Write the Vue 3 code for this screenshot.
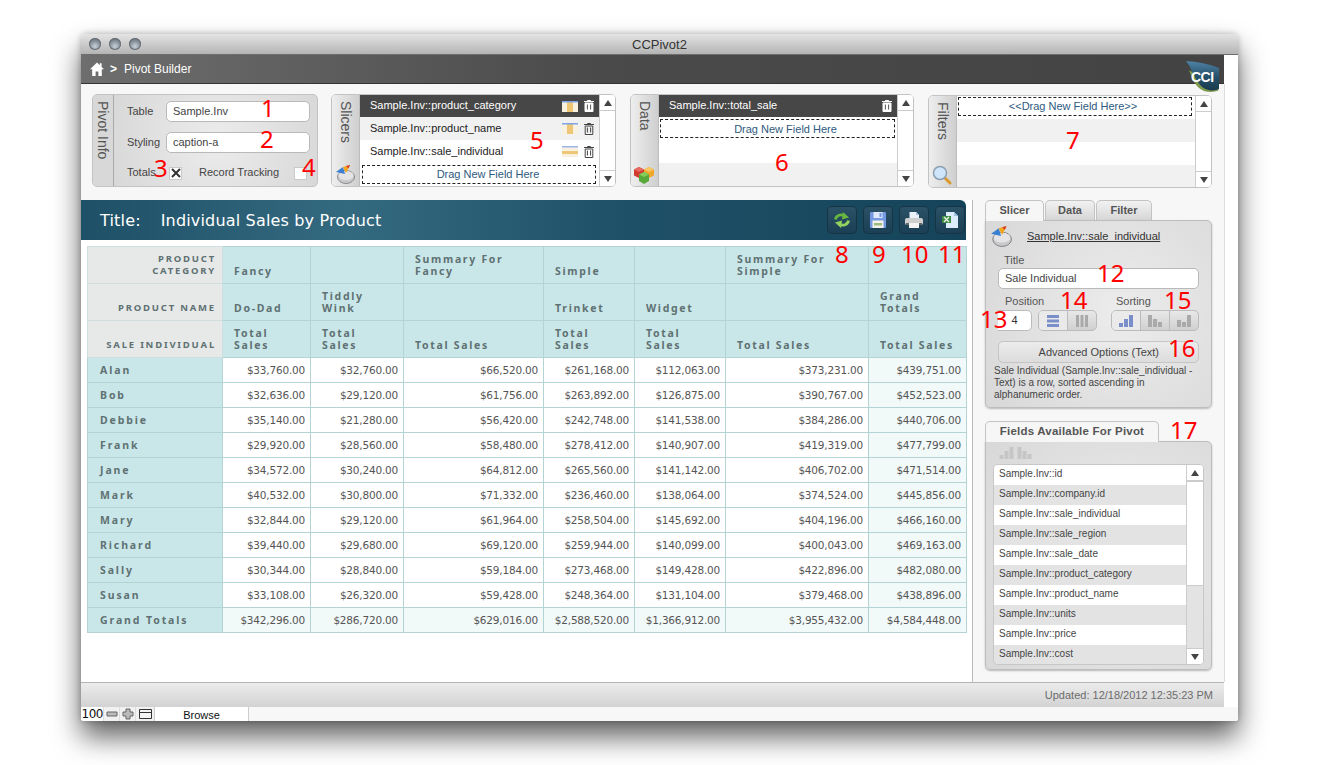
<script setup>
const notes = [
  ['1', 261, 95], ['2', 260, 126], ['3', 154, 155], ['4', 302, 154], ['5', 530, 127], ['6', 775, 149], ['7', 1066, 127],
  ['8', 835, 241], ['9', 872, 241], ['10', 901, 241], ['11', 938, 241], ['12', 1097, 260], ['13', 980, 306],
  ['14', 1060, 287], ['15', 1164, 287], ['16', 1168, 335], ['17', 1170, 417]
]
const cols = [135, 88, 93, 140, 91, 91, 143, 98]
const rows = [
  ['Alan','$33,760.00','$32,760.00','$66,520.00','$261,168.00','$112,063.00','$373,231.00','$439,751.00'],
  ['Bob','$32,636.00','$29,120.00','$61,756.00','$263,892.00','$126,875.00','$390,767.00','$452,523.00'],
  ['Debbie','$35,140.00','$21,280.00','$56,420.00','$242,748.00','$141,538.00','$384,286.00','$440,706.00'],
  ['Frank','$29,920.00','$28,560.00','$58,480.00','$278,412.00','$140,907.00','$419,319.00','$477,799.00'],
  ['Jane','$34,572.00','$30,240.00','$64,812.00','$265,560.00','$141,142.00','$406,702.00','$471,514.00'],
  ['Mark','$40,532.00','$30,800.00','$71,332.00','$236,460.00','$138,064.00','$374,524.00','$445,856.00'],
  ['Mary','$32,844.00','$29,120.00','$61,964.00','$258,504.00','$145,692.00','$404,196.00','$466,160.00'],
  ['Richard','$39,440.00','$29,680.00','$69,120.00','$259,944.00','$140,099.00','$400,043.00','$469,163.00'],
  ['Sally','$30,344.00','$28,840.00','$59,184.00','$273,468.00','$149,428.00','$422,896.00','$482,080.00'],
  ['Susan','$33,108.00','$26,320.00','$59,428.00','$248,364.00','$131,104.00','$379,468.00','$438,896.00'],
  ['Grand Totals','$342,296.00','$286,720.00','$629,016.00','$2,588,520.00','$1,366,912.00','$3,955,432.00','$4,584,448.00']
]
const fields = ['id','company.id','sale_individual','sale_region','sale_date','product_category','product_name','units','price','cost']
</script>

<template>
  <div class="page">
  <div class="win">
    <div class="titlebar">
      <div class="lights"><i></i><i></i><i></i></div>
      <span>CCPivot2</span>
    </div>
    <div class="navrow">
      <div class="nav">
        <svg class="home" viewBox="0 0 14 14" width="14" height="14"><path fill="#fff" d="M7 0.5 0 7.200h2.200V14h3.400V9.400h2.800V14h3.400V7.200H14l-2.400-2.300V1.200H9.800v2z"/></svg>
        <span class="sep">&gt;</span><span>Pivot Builder</span>
      </div>
      <svg class="cci" viewBox="0 0 33 31" width="33" height="31">
        <defs><linearGradient id="ccig" x1="0" y1="0" x2="0" y2="1"><stop offset="0" stop-color="#4f83a6"/><stop offset=".55" stop-color="#24506a"/><stop offset="1" stop-color="#1a3a4c"/></linearGradient></defs>
        <path fill="#7f9a4e" d="M3 9C6 18 10 27 18 30c5 1.500 11 1 14.500-.5l-.5-2z"/>
        <path fill="url(#ccig)" d="M0 0c11 .5 23 3 33 7 .5 7 .5 14 0 21-3 1.500-8 2-12 .5C10 25 8 10 0 0z"/>
        <text x="5" y="21" class="ccitxt">CCI</text>
      </svg>
    </div>

    <div class="content">
      <div class="main">
        <div class="top">
          <div class="panel info">
            <div class="vtab"><span>Pivot Info</span></div>
            <div class="infobody">
              <div class="irow"><label>Table</label><div class="inp">Sample.Inv</div></div>
              <div class="irow"><label>Styling</label><div class="inp">caption-a</div></div>
              <div class="irow last">
                <label class="tot">Totals</label>
                <div class="check"><svg viewBox="0 0 10 10" width="10" height="10"><path d="M1 1l8 8M9 1l-8 8" stroke="#333" stroke-width="2"/></svg></div>
                <label class="rec">Record Tracking</label>
                <div class="check"></div>
              </div>
            </div>
          </div>

          <div class="panel list">
            <div class="vtab ic">
              <span>Slicers</span>
              <svg class="tabicon" viewBox="0 0 20 20" width="20" height="20"><ellipse cx="11" cy="13" rx="8.500" ry="6.500" fill="#c9c9cc" stroke="#777" stroke-width=".8"/><ellipse cx="11" cy="11.500" rx="7.500" ry="4.500" fill="#e4e4e6"/><path d="M1 8l7-5 2 7z" fill="#3b7fd0"/><path d="M8 3l7-2-4 8z" fill="#f2a71b"/><path d="M11 2l4-1-1.500 3.500z" fill="#d83a2a"/></svg>
            </div>
            <div class="rows">
              <div class="row dark"><span>Sample.Inv::product_category</span>
                <svg class="tbl" viewBox="0 0 16 11" width="16" height="11"><rect width="16" height="11" fill="#f8f1df"/><rect x="5" width="6" height="11" fill="#edc676"/><rect width="16" height="1.500" fill="#7ea3e8"/></svg>
                <svg class="trash" viewBox="0 0 10 12" width="10" height="12"><path d="M1 3h8v8.500H1zM0 1.500h10M3.500 1.500V.5h3v1" fill="#fff" stroke="#fff"/><path d="M3.400 4.500v5M6.600 4.500v5" stroke="#555"/></svg>
              </div>
              <div class="row alt"><span>Sample.Inv::product_name</span>
                <svg class="tbl" viewBox="0 0 16 11" width="16" height="11"><rect width="16" height="11" fill="#f8f1df"/><rect x="5" width="6" height="11" fill="#edc676"/><rect width="16" height="1.500" fill="#7ea3e8"/></svg>
                <svg class="trash" viewBox="0 0 10 12" width="10" height="12"><path d="M1.200 3h7.600v8.500H1.200zM0 1.500h10M3.500 1.500V.5h3v1M3.400 4.500v5M6.600 4.500v5" fill="none" stroke="#444"/></svg>
              </div>
              <div class="row"><span>Sample.Inv::sale_individual</span>
                <svg class="tbl" viewBox="0 0 16 11" width="16" height="11"><rect width="16" height="11" fill="#f8f1df"/><rect y="5" width="16" height="3" fill="#edc676"/><rect width="16" height="1.500" fill="#9db7ea"/></svg>
                <svg class="trash" viewBox="0 0 10 12" width="10" height="12"><path d="M1.200 3h7.600v8.500H1.200zM0 1.500h10M3.500 1.500V.5h3v1M3.400 4.500v5M6.600 4.500v5" fill="none" stroke="#444"/></svg>
              </div>
              <div class="drag first">Drag New Field Here</div>
            </div>
            <div class="scroll"><div class="btn up"></div><div class="btn down"></div></div>
          </div>

          <div class="panel list">
            <div class="vtab ic">
              <span>Data</span>
              <svg class="tabicon" viewBox="0 0 20 20" width="20" height="20"><path d="M5 3l5 2.500v6L5 14 0 11.500v-6z" fill="#d23a32"/><path d="M5 3l5 2.500-5 2.500-5-2.500z" fill="#e8695f"/><path d="M15 3l5 2.500v6L15 14l-5-2.500v-6z" fill="#f0a62a"/><path d="M15 3l5 2.500-5 2.500-5-2.500z" fill="#f8c766"/><path d="M10 8l5 2.500v6.500L10 20l-5-3v-6.500z" fill="#58a83a"/><path d="M10 8l5 2.500-5 2.500-5-2.500z" fill="#85cc5c"/></svg>
            </div>
            <div class="rows">
              <div class="row dark"><span>Sample.Inv::total_sale</span>
                <svg class="trash" viewBox="0 0 10 12" width="10" height="12"><path d="M1 3h8v8.500H1zM0 1.500h10M3.500 1.500V.5h3v1" fill="#fff" stroke="#fff"/><path d="M3.400 4.500v5M6.600 4.500v5" stroke="#555"/></svg>
              </div>
              <div class="row plain"><div class="drag datad">Drag New Field Here</div></div>
              <div class="row"></div>
              <div class="row alt"></div>
            </div>
            <div class="scroll"><div class="btn up"></div><div class="btn down"></div></div>
          </div>

          <div class="panel list filt">
            <div class="vtab ic">
              <span>Filters</span>
              <svg class="tabicon" viewBox="0 0 20 20" width="20" height="20"><path d="M12 12l6 6" stroke="#d99a2b" stroke-width="3" stroke-linecap="round"/><circle cx="8" cy="8" r="6.500" fill="#cfe6fa" stroke="#8d9fb3" stroke-width="1.500"/></svg>
            </div>
            <div class="rows">
              <div class="row plain"><div class="drag top2">&lt;&lt;Drag New Field Here&gt;&gt;</div></div>
              <div class="row alt"></div>
              <div class="row"></div>
              <div class="row alt"></div>
            </div>
            <div class="scroll"><div class="btn up"></div><div class="btn down"></div></div>
          </div>
        </div>

        <div class="lower">
          <div class="report">
            <div class="band">
              <div class="ttl"><span>Title:</span><span>Individual Sales by Product</span></div>
              <div class="tools">
                <div class="tool"><svg viewBox="0 0 18 16" width="18" height="16"><path d="M2.500 7.500C3 3.500 8 1.500 12 4" fill="none" stroke="#68b53f" stroke-width="2.800"/><path d="M10 0l6 5.500-7 2z" fill="#68b53f"/><path d="M15.500 8.500C15 12.500 10 14.500 6 12" fill="none" stroke="#93d25e" stroke-width="2.800"/><path d="M8 16l-6-5.500 7-2z" fill="#93d25e"/></svg></div>
                <div class="tool"><svg viewBox="0 0 16 16" width="16" height="16"><rect width="16" height="16" rx="1" fill="#7498e2"/><rect x="3.500" y="0" width="9" height="6" fill="#dfe9fb"/><rect x="9.500" y="1" width="2" height="4" fill="#7498e2"/><rect x="2.500" y="8.500" width="11" height="7.500" fill="#f2f2e8"/><rect x="4" y="11" width="8" height="2.500" fill="#9dbb7f"/></svg></div>
                <div class="tool"><svg viewBox="0 0 18 16" width="18" height="16"><path d="M4.500 0h6.500l3 3v5H4.500z" fill="#eaf1fb"/><path d="M11 0l3 3h-3z" fill="#a9c1e5"/><rect y="6" width="18" height="7" rx="2" fill="#cfcfcf"/><rect x="1" y="11" width="16" height="2" fill="#666"/><rect x="4" y="11" width="10" height="5" fill="#f4f4f4"/></svg></div>
                <div class="tool"><svg viewBox="0 0 16 16" width="16" height="16"><path d="M4 0h8l4 4v12H4z" fill="#dcecf9"/><path d="M12 0l4 4h-4z" fill="#9cc3e3"/><path d="M0 4h9v7H0z" fill="#3f8b45"/><path d="M2 5l5 5M7 5l-5 5" stroke="#e6f3df" stroke-width="1.400"/></svg></div>
              </div>
            </div>
            <table class="pivot">
              <colgroup><col v-for="(w, i) in cols" :key="i" :style="{ width: w + 'px' }" /></colgroup>
              <thead>
                <tr>
                  <th class="corner">PRODUCT<br />CATEGORY</th><th>Fancy</th><th></th><th>Summary For<br />Fancy</th><th>Simple</th><th></th><th>Summary For<br />Simple</th><th></th>
                </tr>
                <tr>
                  <th class="corner">PRODUCT NAME</th><th>Do-Dad</th><th>Tiddly<br />Wink</th><th></th><th>Trinket</th><th>Widget</th><th></th><th>Grand<br />Totals</th>
                </tr>
                <tr>
                  <th class="corner">SALE INDIVIDUAL</th><th>Total<br />Sales</th><th>Total<br />Sales</th><th>Total Sales</th><th>Total<br />Sales</th><th>Total<br />Sales</th><th>Total Sales</th><th>Total Sales</th>
                </tr>
              </thead>
              <tbody>
                <tr v-for="(r, ri) in rows" :key="r[0]" :class="{ grand: ri === rows.length - 1 }">
                  <th>{{ r[0] }}</th>
                  <td v-for="(v, ci) in r.slice(1)" :key="ci" :class="{ tot: ci === 6 }">{{ v }}</td>
                </tr>
              </tbody>
            </table>
          </div>

          <div class="side">
            <div class="tabbed slicer">
              <div class="tabs">
                <div class="tab on">Slicer</div><div class="tab">Data</div><div class="tab wide3">Filter</div>
              </div>
              <div class="box sbox">
                <div class="shead">
                  <svg viewBox="0 0 20 20" width="22" height="22"><ellipse cx="11" cy="13" rx="8.500" ry="6.500" fill="#c9c9cc" stroke="#777" stroke-width=".8"/><ellipse cx="11" cy="11.500" rx="7.500" ry="4.500" fill="#e4e4e6"/><path d="M1 8l7-5 2 7z" fill="#3b7fd0"/><path d="M8 3l7-2-4 8z" fill="#f2a71b"/><path d="M11 2l4-1-1.500 3.500z" fill="#d83a2a"/></svg>
                  <u>Sample.Inv::sale_individual</u>
                </div>
                <div class="lbl ttlb">Title</div>
                <div class="inp wide">Sale Individual</div>
                <div class="lblrow"><span>Position</span><span>Sorting</span></div>
                <div class="ctrls">
                  <div class="posn">4</div>
                  <div class="seg s2">
                    <div class="on"><svg viewBox="0 0 12 12" width="12" height="12"><path d="M0 0h12v3H0zM0 4.500h12v3H0zM0 9h12v3H0z" fill="#7a8fc9"/></svg></div>
                    <div><svg viewBox="0 0 12 12" width="12" height="12"><path d="M0 0h3v12H0zM4.500 0h3v12h-3zM9 0h3v12H9z" fill="#aaa"/></svg></div>
                  </div>
                  <div class="seg s3">
                    <div class="on"><svg viewBox="0 0 14 12" width="14" height="12"><path d="M0 8h4v4H0zM5 4h4v8H5zM10 0h4v12h-4z" fill="#7a8fc9"/></svg></div>
                    <div><svg viewBox="0 0 14 12" width="14" height="12"><path d="M0 0h4v12H0zM5 4h4v8H5zM10 7h4v5h-4z" fill="#aaa"/></svg></div>
                    <div><svg viewBox="0 0 14 12" width="14" height="12"><path d="M0 5h4v7H0zM5 7h4v5H5zM10 0h4v12h-4z" fill="#aaa"/></svg></div>
                  </div>
                </div>
                <div class="adv">Advanced Options (Text)</div>
                <p>Sale Individual (Sample.Inv::sale_individual - Text) is a row, sorted ascending in alphanumeric order.</p>
              </div>
            </div>

            <div class="tabbed avail">
              <div class="tabs"><div class="tab on fat">Fields Available For Pivot</div></div>
              <div class="box fbox">
                <div class="ghost">
                  <svg viewBox="0 0 14 12" width="15" height="12"><path d="M0 8h4v4H0zM5 4h4v8H5zM10 0h4v12h-4z" fill="#c6c6c6"/></svg>
                  <svg viewBox="0 0 14 12" width="15" height="12"><path d="M0 0h4v12H0zM5 4h4v8H5zM10 7h4v5h-4z" fill="#c6c6c6"/></svg>
                </div>
                <div class="flist">
                  <div class="frows"><div v-for="f in fields" :key="f" class="frow">Sample.Inv::{{ f }}</div></div>
                  <div class="fscroll"><div class="btn up"></div><div class="thumb"></div><div class="track"></div><div class="btn down"></div></div>
                </div>
              </div>
            </div>
          </div>
        </div>
      </div>
      <div class="strip"></div>
    </div>

    <div class="status"><span>Updated: 12/18/2012 12:35:23 PM</span></div>
    <div class="bottom">
      <div class="zoomv">100</div>
      <div class="zb"><svg viewBox="0 0 12 12" width="12" height="12"><path d="M1 4h10v4H1z" fill="#bbb" stroke="#666"/></svg></div>
      <div class="zb"><svg viewBox="0 0 12 12" width="12" height="12"><path d="M4 1h4v3h3v4H8v3H4V8H1V4h3z" fill="#bbb" stroke="#666"/></svg></div>
      <div class="zb wide2"><svg viewBox="0 0 13 10" width="13" height="10"><path d="M.5.5h12v9H.5zM.5 3.500h12" fill="#f4f4f4" stroke="#333"/></svg></div>
      <div class="browse">Browse</div>
      <div class="rest"></div>
    </div>

    <div v-for="n in notes" :key="n[0]" class="note" :style="{ left: n[1] - 81 + 'px', top: n[2] - 34 + 'px' }">{{ n[0] }}</div>
  </div>
  </div>
</template>

<style>
html { margin: 0; background: #fff; }
body { margin: 0; }
</style>

<style scoped>
.page { height: 765px; box-sizing: border-box; padding: 34px 0 0 81px; overflow: hidden; background: #fff; }
.win { position: relative; box-sizing: border-box; width: 1157px; height: 687px; border-radius: 5px 5px 3px 3px; background: #fff; box-shadow: 0 16px 28px rgba(0,0,0,.62), 0 0 6px rgba(0,0,0,.25); font-family: "Liberation Sans", Arial, sans-serif; color: #333; display: flex; flex-direction: column; }
.titlebar { height: 21px; flex: none; position: relative; display: flex; align-items: center; justify-content: center; background: linear-gradient(#e4e4e4, #b4b4b4); border-radius: 5px 5px 0 0; border-bottom: 1px solid #6e6e6e; box-sizing: border-box; font: 13px "Liberation Sans", sans-serif; color: #333; }
.lights { position: absolute; left: 8px; top: 4px; display: flex; gap: 8px; }
.lights i { width: 12px; height: 12px; border-radius: 50%; background: radial-gradient(circle at 50% 70%, #c8d2da, #68737c 75%); box-shadow: inset 0 0 0 1px #6a6f75; }
.navrow { height: 29px; flex: none; position: relative; margin-right: 14px; background: linear-gradient(90deg, #6e6e6e, #4a4a4a 45%, #434343); box-shadow: inset 0 -1px 0 #333; }
.nav { display: flex; align-items: center; height: 28px; padding-left: 9px; color: #fff; font-size: 12px; }
.sep { margin: 0 7px 0 6px; font-weight: 700; }
.cci { position: absolute; right: 5px; top: 6px; z-index: 2; }
.ccitxt { font: 700 14px "Liberation Sans", sans-serif; fill: #fff; letter-spacing: -.5px; }
.content { flex: 1; min-height: 0; display: flex; }
.main { flex: 1; min-width: 0; display: flex; flex-direction: column; background: #fff; }
.strip { width: 14px; flex: none; background: #fff; border-left: 1px solid #ddd; box-sizing: border-box; }
.top { height: 116px; flex: none; box-sizing: border-box; padding: 10px 0 0 11px; display: flex; align-items: flex-start; background: #f7f7f7; }
.panel { height: 93px; box-sizing: border-box; border: 1px solid #c3c3c3; border-radius: 5px; display: flex; overflow: hidden; background: #fff; flex: none; }
.info { width: 226px; margin-right: 13px; background: radial-gradient(circle at 55% 50%, #ececec, #d4d4d4); }
.list { width: 285px; margin-right: 14px; }
.list + .list { width: 284px; }
.filt { margin-top: 1px; }
.vtab { width: 28px; flex: none; box-sizing: border-box; background: linear-gradient(90deg, #eee, #cfcfcf); border-right: 1px solid #bdbdbd; position: relative; font-size: 14px; color: #555; }
.info .vtab { width: 21px; background: #d8d8d8; border-right: 1px solid #aaa; }
.vtab span { position: absolute; top: 6px; left: 50%; transform: translateX(-50%); writing-mode: vertical-rl; white-space: nowrap; line-height: 1; }
.tabicon { position: absolute; left: 3px; bottom: 2px; }
.infobody { flex: 1; padding: 6px 7px 0 13px; }
.irow { display: flex; align-items: center; height: 21px; margin-bottom: 10px; font-size: 11px; color: #444; }
.irow label { width: 39px; flex: none; margin-top: -2px; }
.inp { background: #fff; border: 1px solid #b9b9b9; border-radius: 5px; box-sizing: border-box; height: 21px; line-height: 19px; padding-left: 6px; font-size: 11px; color: #444; flex: 1; }
.irow.last { margin-top: -1px; }
.irow .tot { width: 42px; }
.irow .rec { width: 95px; margin-left: 17px; }
.check { width: 13px; height: 13px; flex: none; background: #fff; border: 1px solid #c9c9c9; box-sizing: border-box; display: flex; align-items: center; justify-content: center; margin-top: 1px; }
.rows { flex: 1; min-width: 0; background: #fff; }
.row { height: 23px; display: flex; align-items: center; box-sizing: border-box; padding: 0 5px 0 10px; font-size: 11px; color: #222; }
.row span { flex: 1; position: relative; top: -1px; }
.row.dark { background: #474747; color: #fff; height: 22px; }
.row.alt { background: #f1f1f1; }
.row.plain { padding: 0 2px 0 1px; }
.filt .row.plain { padding-right: 3px; }
.tbl { margin-right: 6px; }
.drag { flex: 1; border: 1px dashed #222; height: 19px; box-sizing: border-box; text-align: center; line-height: 17px; font-size: 11px; color: #2d5a7e; }
.drag.first { margin: 2px 3px 0 2px; flex: none; padding-left: 18px; }
.datad { line-height: 18px; padding-left: 16px; }
.top2 { margin-top: -3px; padding-right: 4px; }
.scroll { width: 16px; flex: none; display: flex; flex-direction: column; justify-content: space-between; background: #fff; border-left: 1px solid #ccc; box-sizing: border-box; }
.btn { height: 16px; flex: none; position: relative; background: #fff; box-sizing: border-box; }
.btn.up { border-bottom: 1px solid #ccc; }
.btn.down { border-top: 1px solid #ccc; }
.btn::after { content: ""; position: absolute; left: 50%; top: 5px; margin-left: -4px; border-left: 4px solid transparent; border-right: 4px solid transparent; }
.btn.up::after { border-bottom: 6px solid #444; }
.btn.down::after { border-top: 6px solid #444; }
.lower { flex: 1; min-height: 0; display: flex; background: #fff; }
.report { width: 891px; flex: none; box-sizing: border-box; }
.band { width: 885px; height: 40px; display: flex; align-items: center; justify-content: space-between; box-sizing: border-box; padding: 0 1px 0 19px; background: linear-gradient(90deg, #1e5067, #346a80 30%, #1e5067 62%, #15445a); border-radius: 0 6px 0 0; }
.ttl { color: #fff; font: 16px "DejaVu Sans", sans-serif; display: flex; gap: 20px; letter-spacing: .17px; }
.tools { display: flex; gap: 6px; }
.tool { width: 30px; height: 28px; border-radius: 5px; background: linear-gradient(#2c5268, #1a3f54); box-shadow: inset 0 0 0 1px #173445; display: flex; align-items: center; justify-content: center; }
.pivot { width: 879px; margin: 6px 0 0 6px; border-collapse: collapse; table-layout: fixed; font-family: "Noto Sans", sans-serif; font-size: 11px; }
.pivot thead th { height: 37px; box-sizing: border-box; background: #c9e7e8; border: 1px solid #b4d4d3; padding: 0 4px 6px 11px; text-align: left; vertical-align: bottom; font-weight: 700; font-size: 10.500px; color: #5f7173; letter-spacing: 1.700px; line-height: 12px; }
.pivot thead th.corner { background: #e6e9e8; border-color: #cfdede; text-align: right; font-size: 9.500px; letter-spacing: 1.800px; padding: 0 6px 6px 0; white-space: nowrap; }
.pivot tbody th { height: 25px; box-sizing: border-box; background: #c9e7e8; border: 1px solid #b4d4d3; text-align: left; padding: 0 0 0 12px; font-weight: 700; font-size: 10.500px; color: #5f7173; letter-spacing: 1.900px; }
.pivot td { box-sizing: border-box; height: 25px; border: 1px solid #b4d4d3; text-align: right; padding: 0 5px 0 0; color: #555; font-family: "DejaVu Sans", sans-serif; font-size: 10.500px; letter-spacing: -.2px; white-space: nowrap; background: #fff; }
.pivot td.tot, .pivot tr.grand td { background: #f2f9f9; }
.side { flex: 1; min-width: 0; background: #f7f7f7; border-left: 1px solid #bbb; padding: 0 12px 0 12px; }
.tabs { display: flex; height: 20px; }
.tab { width: 50px; height: 20px; box-sizing: border-box; border: 1px solid #c3c3c3; border-bottom: none; border-radius: 5px 5px 0 0; background: linear-gradient(#f2f2f2, #d6d6d6); text-align: center; font: 700 11px/19px "Liberation Sans", sans-serif; color: #555; margin-right: 1px; }
.tab.on { width: 59px; background: #f6f6f6; margin-right: 1px; position: relative; z-index: 1; height: 21px; }
.tab.wide3 { width: 56px; }
.tab.fat { width: 174px; font-size: 11.500px; letter-spacing: .2px; }
.box { border: 1px solid #bdbdbd; border-radius: 0 5px 5px 5px; background: radial-gradient(circle at 60% 50%, #ececec, #d8d8d8); box-sizing: border-box; box-shadow: 0 1px 2px rgba(0,0,0,.25); }
.sbox { height: 188px; padding: 0 12px; position: relative; }
.shead { display: flex; align-items: center; height: 30px; font-size: 11px; color: #333; margin-left: -8px; gap: 15px; }
.lbl { font-size: 11px; color: #555; }
.ttlb { margin: 3px 0 2px 6px; }
.inp.wide { height: 21px; }
.lblrow { display: flex; font-size: 11px; color: #555; margin: 6px 0 2px 7px; height: 13px; }
.lblrow span:first-child { width: 111px; }
.ctrls { display: flex; align-items: center; }
.posn { width: 34px; height: 21px; background: #fff; border: 1px solid #bbb; border-left: none; border-radius: 0 5px 5px 0; box-sizing: border-box; font-size: 11px; line-height: 19px; text-align: center; }
.seg { height: 21px; display: flex; border: 1px solid #bbb; border-radius: 5px; box-sizing: border-box; overflow: hidden; background: linear-gradient(#e8e8e8, #d0d0d0); }
.seg div { display: flex; align-items: center; justify-content: center; width: 29px; border-left: 1px solid #bbb; }
.seg div:first-child { border-left: none; }
.seg .on { background: #eaeaea; }
.s2 { margin-left: 6px; width: 59px; }
.s3 { margin-left: 14px; width: 88px; }
.adv { height: 22px; margin-top: 10px; border: 1px solid #c5c5c5; border-radius: 5px; background: linear-gradient(#ececec, #dcdcdc); box-sizing: border-box; text-align: right; padding-right: 39px; font-size: 11px; line-height: 20px; color: #444; }
p { margin: 2px -3px 0 -4px; font-size: 10px; line-height: 12px; color: #444; }
.avail { margin-top: 13px; }
.fbox { height: 229px; padding: 0 7px; border-top-left-radius: 0; }
.ghost { height: 22px; display: flex; align-items: center; gap: 3px; padding-left: 6px; }
.flist { height: 201px; display: flex; border-radius: 5px; overflow: hidden; border: 1px solid #c7c7c7; box-sizing: border-box; }
.frows { flex: 1; min-width: 0; }
.frow { height: 20px; box-sizing: border-box; padding-left: 5px; font-size: 10px; line-height: 17px; color: #444; background: #fff; }
.frow:nth-child(even) { background: #e3e3e3; }
.fscroll { width: 17px; flex: none; display: flex; flex-direction: column; background: #fff; border-left: 1px solid #ccc; box-sizing: border-box; }
.thumb { height: 103px; background: #fff; border-top: 1px solid #ccc; border-bottom: 1px solid #ccc; }
.track { flex: 1; background: #e3e3e3; }
.status { height: 25px; flex: none; margin-right: 14px; box-sizing: border-box; border-top: 1px solid #b5b5b5; background: linear-gradient(#ececec, #d2d2d2); text-align: right; padding-right: 11px; font-size: 11px; line-height: 24px; color: #6c6c6c; }
.bottom { height: 14px; flex: none; display: flex; background: #f5f5f5; border-radius: 0 0 3px 3px; overflow: hidden; }
.zoomv { width: 22px; background: #fff; font: 12px/15px "DejaVu Sans", sans-serif; color: #111; text-align: right; letter-spacing: -.5px; }
.zb { width: 16px; box-sizing: border-box; display: flex; align-items: center; justify-content: center; background: #f1f1f1; border-left: 1px solid #ddd; }
.zb.wide2 { width: 19px; }
.browse { width: 95px; background: #fff; border-left: 1px solid #ccc; border-right: 1px solid #ccc; text-align: center; font: 11px/17px "Liberation Sans", sans-serif; color: #111; box-sizing: border-box; }
.rest { flex: 1; background: #f7f7f7; }
.note { position: absolute; font: 24px/26px "Noto Sans", sans-serif; color: #f00; z-index: 5; }
</style>
